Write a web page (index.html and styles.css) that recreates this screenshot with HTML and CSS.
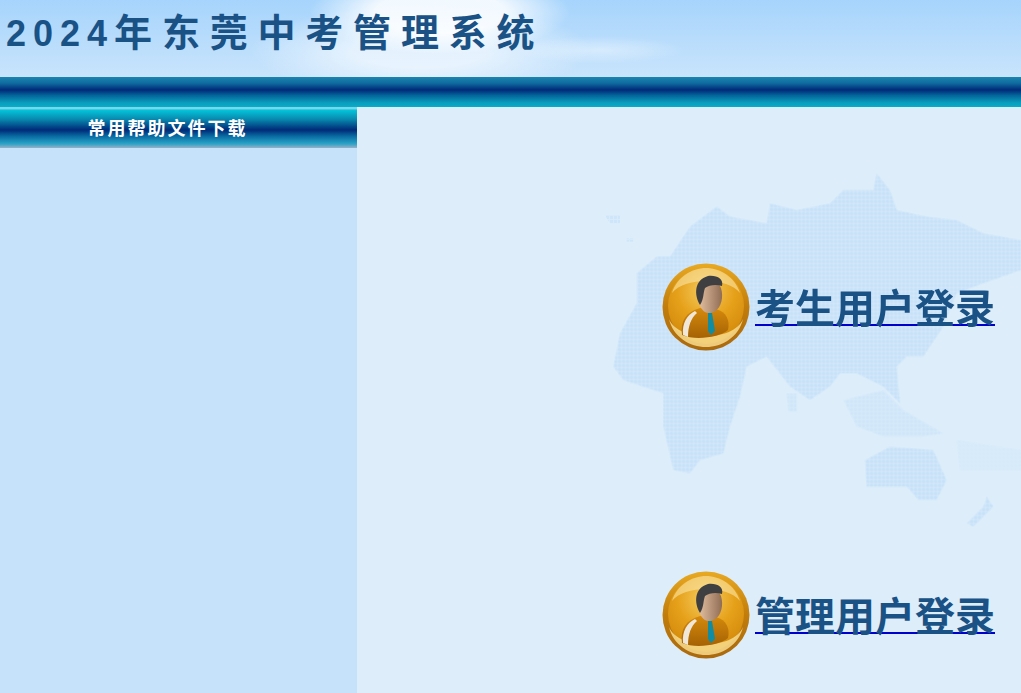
FILE: index.html
```html
<!DOCTYPE html>
<html lang="zh-CN">
<head>
    <meta charset="UTF-8">
    <title>2024年东莞中考管理系统</title>
    <link rel="stylesheet" href="styles.css">
</head>
<body>
    <!-- top banner -->
    <header class="banner">
        <h1 class="banner-title"><span class="title-year">2024</span>年东莞中考管理系统</h1>
    </header>
    <div class="top-bar"></div>

    <div class="content">
        <!-- left column -->
        <aside class="sidebar">
            <div class="sidebar-head">常用帮助文件下载</div>
        </aside>

        <!-- login links -->
        <main class="login-area">
            <svg class="world-map" viewBox="0 0 1293 1140" aria-hidden="true">
                <defs>
                    <pattern id="dots" width="12" height="12" patternUnits="userSpaceOnUse">
                        <rect width="12" height="12" fill="#d6e9fa"/>
                        <rect width="9" height="9" fill="#c6e1f8"/>
                    </pattern>
                    <filter id="soft"><feGaussianBlur stdDeviation="1"/></filter>
                </defs>
                <g fill="url(#dots)" filter="url(#soft)">
                    <path d="M240 290L300 200 380 140 420 170 530 190 540 130 620 150 720 130 760 90 850 90 860 40 900 90 920 150 1010 170 1100 180 1180 220 1293 240V330L1180 370 1100 400 1060 500 1000 590 950 590 920 620 930 730 880 680 800 640 750 640 720 680 660 720 600 680 530 590 470 620 450 710 420 800 400 880 330 900 300 940 250 930 220 800 220 700 100 660 70 620 90 520 140 430 140 340 200 290Z"/>
                    <path d="M825 900L900 860 1030 870 1070 960 1040 1020 985 1020 950 980 830 980Z"/>
                    <path d="M1130 1090L1180 1040 1190 1010 1210 1040 1170 1080 1150 1100Z"/>
                    <path d="M760 720L880 690 940 750 1060 820 1000 830 880 830 800 800Z" opacity=".6"/>
                    <path d="M1100 840L1293 870V930L1110 930Z" opacity=".35"/>
                    <path d="M45 165H90V190H60Z" opacity=".7"/>
                    <path d="M110 235H130V245H110Z" opacity=".6"/>
                    <path d="M590 700H620V755H595Z" opacity=".6"/>
                </g>
            </svg>

            <a class="login-link" href="#">
                <svg class="user-icon" viewBox="0 0 88 88" aria-hidden="true">
                    <defs>
                        <linearGradient id="ring" x1="0" y1="0" x2="0" y2="1">
                            <stop offset="0" stop-color="#e8a922"/>
                            <stop offset=".5" stop-color="#c17c0a"/>
                            <stop offset="1" stop-color="#a9690f"/>
                        </linearGradient>
                        <radialGradient id="disc" cx=".5" cy=".3" r=".75">
                            <stop offset="0" stop-color="#f4cd63"/>
                            <stop offset=".5" stop-color="#e6a11a"/>
                            <stop offset="1" stop-color="#cf8408"/>
                        </radialGradient>
                        <linearGradient id="jacket" x1="0" y1="0" x2="0" y2="1">
                            <stop offset="0" stop-color="#d58a0c"/>
                            <stop offset="1" stop-color="#a66204"/>
                        </linearGradient>
                        <linearGradient id="face" x1="0" y1="0" x2="1" y2="0">
                            <stop offset="0" stop-color="#e6c2a2"/>
                            <stop offset="1" stop-color="#8f6c55"/>
                        </linearGradient>
                        <g id="user">
                            <circle cx="44" cy="44" r="43.5" fill="url(#ring)"/>
                            <circle cx="44" cy="43" r="38" fill="url(#disc)"/>
                            <path d="M10 30C15 14 30 5 44 5S73 14 78 30C66 14 22 14 10 30Z" fill="#fbe6a6" opacity=".6"/>
                            <path d="M7 56C16 79 72 79 81 56 77 74 60 84 44 84S11 74 7 56Z" fill="#f8dc8e" opacity=".85"/>
                            <path d="M20 72C18 58 24 49 38 45L54 46C65 49 68 58 66 67 58 74 34 78 20 72Z" fill="url(#jacket)"/>
                            <path d="M21 72C20 60 25 52 33 48L35 50C29 55 26 63 26 74Z" fill="#f1e7d8"/>
                            <path d="M46 50L50 50 53 68 49 72 46 68Z" fill="#128ca0"/>
                            <path d="M36 34C35 24 40 17 49 17 57 17 61 26 60 35 59 45 53 50 47 50 41 50 37 44 36 34Z" fill="url(#face)"/>
                            <path d="M38 42C32 32 32 17 46 13 55 12 62 16 60 23 54 21 47 22 43 25 41 30 42 36 38 42Z" fill="#3f3f41"/>
                        </g>
                    </defs>
                    <use href="#user"/>
                </svg>
                <span class="login-text">考生用户登录</span>
            </a>

            <a class="login-link" href="#">
                <svg class="user-icon" viewBox="0 0 88 88" aria-hidden="true">
                    <use href="#user"/>
                </svg>
                <span class="login-text">管理用户登录</span>
            </a>
        </main>
    </div>
</body>
</html>
```

FILE: styles.css
```css
html, body {
    height: 100%;
}

body {
    margin: 0;
    overflow: hidden;
    display: flex;
    flex-direction: column;
    font-family: "Liberation Serif", "Noto Sans CJK SC", serif;
    background-color: #ddeefa;
}

.banner {
    height: 77px;
    flex: none;
    box-sizing: border-box;
    padding: 10px 0 0 6px;
    background:
        radial-gradient(ellipse 85px 14px at 600px 50px, rgba(255, 255, 255, 0.4), rgba(255, 255, 255, 0) 100%),
        radial-gradient(ellipse 130px 42px at 440px 12px, rgba(255, 255, 255, 0.85) 50%, rgba(255, 255, 255, 0) 100%),
        radial-gradient(ellipse 170px 45px at 420px 50px, rgba(255, 255, 255, 0.6) 40%, rgba(255, 255, 255, 0) 100%),
        linear-gradient(#a6d4fc, #c9e4fc 100%);
}

.banner-title {
    margin: 0;
    font-family: "Liberation Sans", "Noto Sans CJK SC", sans-serif;
    font-size: 38px;
    line-height: 46px;
    font-weight: bold;
    letter-spacing: 9.8px;
    color: #1a5286;
    white-space: nowrap;
}

.title-year {
    font-size: 36px;
    letter-spacing: 7px;
}

.top-bar {
    height: 30px;
    flex: none;
    background: linear-gradient(#1b84ae 0, #0f6da0 20%, #002a78 43%, #04679c 62%, #0a9cbc 85%, #08adc8 100%);
}

.content {
    flex: 1;
    display: flex;
    min-height: 0;
}

.sidebar {
    width: 357px;
    flex: none;
    background-color: #c6e2fa;
}

.sidebar-head {
    height: 41px;
    box-sizing: border-box;
    padding: 2px 22px 0 0;
    line-height: 41px;
    text-align: center;
    font-size: 18px;
    font-weight: bold;
    letter-spacing: 2px;
    color: #fff;
    background: linear-gradient(#7ad6ea 0, #7ad6ea 2px, #04c6dc 7%, #0888ae 30%, #002a78 56%, #0a6ea4 72%, #2aa5c8 90%, #7fa9c4 97%, #8fb5d0 100%);
}

.login-area {
    flex: 1;
    position: relative;
    display: flex;
    flex-direction: column;
    align-items: flex-end;
    gap: 220px;
    padding: 156px 26px 0 0;
}

.world-map {
    position: absolute;
    left: 233px;
    top: 53px;
    width: 431px;
    height: 380px;
}

.login-link {
    position: relative;
    display: flex;
    align-items: center;
    gap: 5px;
    text-decoration: none;
}

.user-icon {
    width: 88px;
    height: 88px;
    flex: none;
}

.login-text {
    font-size: 40px;
    line-height: 44px;
    font-weight: bold;
    color: #1a5286;
    border-bottom: 2px solid #0000cc;
    height: 36px;
    white-space: nowrap;
}
```
